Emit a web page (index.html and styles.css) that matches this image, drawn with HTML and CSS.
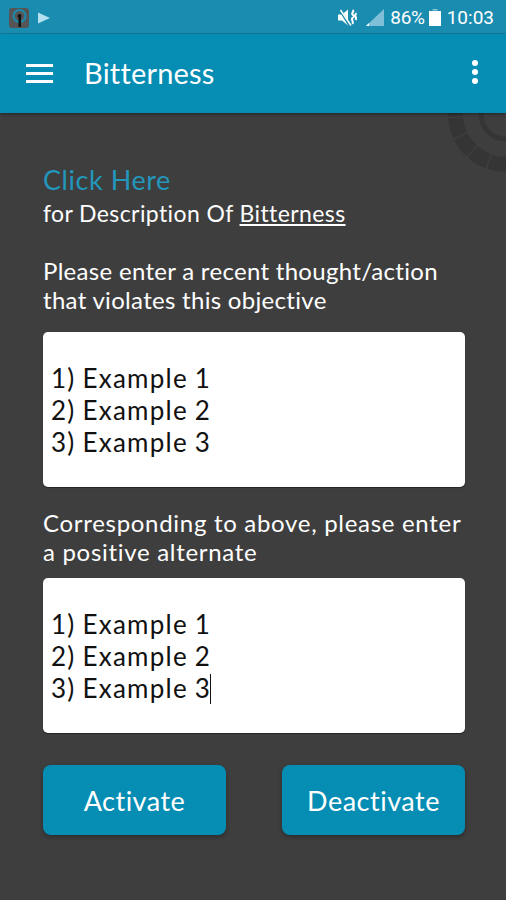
FILE: index.html
```html
<!DOCTYPE html>
<html lang="en">
<head>
  <meta charset="UTF-8">
  <meta name="viewport" content="width=device-width, initial-scale=1.0">
  <link rel="stylesheet" href="styles.css">
  <title>Bitterness</title>
</head>
<body>
  <div class="screen">
    <div class="statusbar">
      <div class="status-left">
        <svg class="app-icon" width="20" height="20" viewBox="0 0 20 20">
          <rect width="20" height="20" rx="3" fill="#555"/>
          <circle cx="10.500" cy="8" r="6" fill="none" stroke="#1a8cb0" stroke-width="2"/>
          <circle cx="10.500" cy="8" r="2" fill="#111"/>
          <rect x="9.500" y="8" width="2.500" height="11" fill="#111"/>
        </svg>
        <svg width="12" height="14" viewBox="0 0 12 14"><path d="M0 1.500 12 7 0 12.500z" fill="#b5e0ef"/></svg>
      </div>
      <div class="status-right">
        <svg class="mute-icon" width="19" height="17" viewBox="0 0 19 17">
          <path d="M0 5.500h4L10 .5v16l-6-5H0z" fill="#fff"/>
          <path d="M1.500 0l10 16.500" stroke="#1a8cb0" stroke-width="2.500"/>
          <path d="M2.500 1l10.500 15.500" stroke="#fff" stroke-width="1.500"/>
          <path d="M14.500 1c2.500 1.500-1.500 3 0 4.500s2 2 0 3.500 1.500 3 0 6M17.500 4c1 1.500-1 2 0 3.500s1 2 0 3.500" fill="none" stroke="#fff" stroke-width="2"/>
        </svg>
        <svg class="signal-icon" width="18" height="17" viewBox="0 0 18 17">
          <path d="M18 0v17H0z" fill="#7fc0d8"/>
          <path d="M0 17l3-3v3z" fill="#fff"/>
        </svg>
        <span class="battery-pct">86%</span>
        <svg class="battery-icon" width="12" height="17" viewBox="0 0 12 17">
          <path d="M3.500 0h5v1.500h-5z" fill="#8cc6da"/>
          <path d="M0 2h12v15H0z" fill="#fff"/>
        </svg>
        <span class="clock">10:03</span>
      </div>
    </div>

    <header class="toolbar">
      <div class="menu-icon"><span></span><span></span><span></span></div>
      <h1 class="title">Bitterness</h1>
      <div class="overflow-icon"><span></span><span></span><span></span></div>
    </header>

    <main class="content">
      <svg class="gear" width="58" height="60" viewBox="0 0 58 60">
        <circle class="gear-outer" cx="58" cy="1" r="50.500"/>
        <circle class="gear-inner" cx="58" cy="1" r="25"/>
      </svg>

      <a class="click-here">Click Here</a>
      <p class="description">for Description Of <u>Bitterness</u></p>

      <label class="prompt prompt-first">Please enter a recent thought/action<br>that violates this objective</label>
      <div class="entry">
        <div>1) Example 1</div>
        <div>2) Example 2</div>
        <div>3) Example 3</div>
      </div>

      <label class="prompt prompt-second">Corresponding to above, please enter<br>a positive alternate</label>
      <div class="entry entry-second">
        <div>1) Example 1</div>
        <div>2) Example 2</div>
        <div>3) Example 3<span class="caret"></span></div>
      </div>

      <div class="actions">
        <button class="action">Activate</button>
        <button class="action">Deactivate</button>
      </div>
    </main>
  </div>
</body>
</html>
```

FILE: styles.css
```css
* {
  box-sizing: border-box;
}

body {
  margin: 0;
  background-color: #3e3e3e;
  font-family: "Lato", sans-serif;
  font-variant-ligatures: none;
  color: #fff;
}

.screen {
  height: 900px;
  overflow: hidden;
  display: flex;
  flex-direction: column;
}

.statusbar {
  height: 34px;
  background-color: #1a8cb0;
  border-bottom: 1px solid #167f9f;
  display: flex;
  justify-content: space-between;
  align-items: center;
  padding: 2px 12px 0 9px;
}

.status-left,
.status-right {
  display: flex;
  align-items: center;
}

.app-icon {
  margin-right: 9px;
}

.status-right {
  font-family: "Roboto", sans-serif;
  font-size: 19px;
}

.battery-pct {
  letter-spacing: -0.3px;
}

.signal-icon {
  margin-left: 9px;
  margin-right: 6px;
}

.battery-icon {
  margin-left: 4px;
  margin-right: 6px;
}

.toolbar {
  height: 79px;
  background-color: #068db4;
  display: flex;
  align-items: center;
  padding: 0 26px;
  box-shadow: 0 1px 3px rgba(0, 0, 0, 0.4);
  position: relative;
  z-index: 1;
}

.menu-icon {
  width: 27px;
  display: flex;
  flex-direction: column;
  gap: 5px;
}

.menu-icon span {
  height: 3px;
  background-color: #fff;
}

.title {
  margin: -2px 0 0 31px;
  font-size: 29px;
  font-weight: 400;
  letter-spacing: 0.2px;
  flex: 1;
}

.overflow-icon {
  display: flex;
  flex-direction: column;
  gap: 3px;
  margin-right: 2px;
  margin-top: -3px;
}

.overflow-icon span {
  width: 6px;
  height: 6px;
  border-radius: 50%;
  background-color: #fff;
}

.content {
  flex: 1;
  position: relative;
  padding: 50px 41px 0 43px;
}

.gear {
  position: absolute;
  top: 0;
  right: 0;
}

.gear-outer {
  fill: none;
  stroke: #353535;
  stroke-width: 15;
  stroke-dasharray: 18 1.500;
}

.gear-inner {
  fill: none;
  stroke: #353535;
  stroke-width: 5;
}

.click-here {
  display: block;
  font-size: 27px;
  letter-spacing: 0.55px;
  line-height: 34px;
  color: #2296bb;
}

.description {
  margin: 0;
  font-size: 23px;
  letter-spacing: 0.4px;
  line-height: 32px;
}

.prompt {
  display: block;
  font-size: 24px;
  line-height: 29px;
}

.prompt-first {
  margin-top: 27px;
  letter-spacing: 0.3px;
}

.prompt-second {
  margin-top: 21px;
  letter-spacing: 0.7px;
}

.entry {
  margin-top: 18px;
  height: 155px;
  background-color: #fff;
  border-radius: 5px;
  box-shadow: 0 1px 1px rgba(0, 0, 0, 0.4);
  padding: 30px 8px 0;
  font-size: 26px;
  letter-spacing: 1.25px;
  word-spacing: -1px;
  line-height: 32px;
  color: #111;
}

.entry-second {
  margin-top: 12px;
}

.caret {
  display: inline-block;
  width: 1px;
  height: 30px;
  margin-left: -1px;
  vertical-align: -6px;
  background-color: #111;
}

.actions {
  margin-top: 32px;
  display: flex;
  justify-content: space-between;
}

.action {
  width: 183px;
  height: 70px;
  border: none;
  border-radius: 8px;
  background-color: #068db4;
  color: #fff;
  font-family: inherit;
  font-size: 27px;
  letter-spacing: 0.5px;
  box-shadow: 0 2px 4px rgba(0, 0, 0, 0.3);
}
```
